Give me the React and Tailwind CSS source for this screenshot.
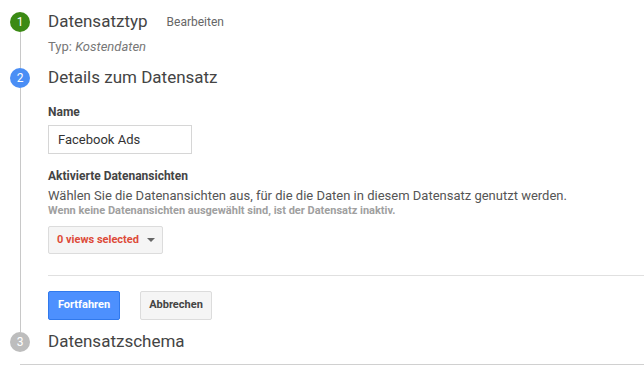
export default function App() {
  return (
    <div className="min-h-screen bg-white pl-[10px] pt-[12px] font-['Roboto',sans-serif] text-[#444]">
      {/* Step 1 */}
      <div className="flex">
        <div className="flex w-5 flex-col items-center">
          <div className="flex h-5 w-5 items-center justify-center rounded-full bg-[#3b8a14] text-[12px] text-white">1</div>
          <div className="w-px flex-1 bg-[#c8c8c8]"></div>
        </div>
        <div className="pb-[13px] pl-[18px]">
          <div className="flex h-5 items-center">
            <span className="text-[17px]">Datensatztyp</span>
            <span className="ml-[19px] text-[12px] text-[#666]">Bearbeiten</span>
          </div>
          <div className="mt-[7px] text-[13px] leading-[16px] text-[#777]">
            Typ: <i>Kostendaten</i>
          </div>
        </div>
      </div>

      {/* Step 2 */}
      <div className="flex">
        <div className="flex w-5 flex-col items-center">
          <div className="flex h-5 w-5 items-center justify-center rounded-full bg-[#4a8ef5] text-[12px] text-white">2</div>
          <div className="w-px flex-1 bg-[#c8c8c8]"></div>
        </div>
        <div className="flex-1 pb-[12px] pl-[18px]">
          <div className="flex h-5 items-center text-[17px]">Details zum Datensatz</div>
          <div className="mt-[17px] text-[12px] font-bold leading-[14px] text-[#444]">Name</div>
          <input
            className="mt-[6px] block h-[29px] w-[144px] border border-[#d6d6d6] px-[9px] text-[13px] text-[#333] outline-none"
            defaultValue="Facebook Ads"
          />
          <div className="mt-[15px] text-[12px] font-bold leading-[14px]">Aktivierte Datenansichten</div>
          <div className="mt-[5px] text-[13px] leading-[16px] text-[#555]">
            Wählen Sie die Datenansichten aus, für die die Daten in diesem Datensatz genutzt werden.
          </div>
          <div className="text-[11px] font-bold leading-[13px] text-[#a0a0a0]">
            Wenn keine Datenansichten ausgewählt sind, ist der Datensatz inaktiv.
          </div>
          <button className="mt-[9px] flex h-[28px] w-[115px] items-center rounded-[2px] border border-[#dcdcdc] bg-[#f5f5f5] pl-[8px] text-[11px] font-bold text-[#dd4b39]">
            0 views selected
            <span className="ml-[8px] h-0 w-0 border-x-[4px] border-t-[4px] border-x-transparent border-t-[#666]"></span>
          </button>
          <div className="mt-[21px] h-px bg-[#e0e0e0]"></div>
          <div className="mt-[15px] flex gap-[20px]">
            <button className="h-[29px] w-[72px] rounded-[2px] border border-[#3079ed] bg-[#4d90fe] text-[11px] font-bold text-white">
              Fortfahren
            </button>
            <button className="h-[29px] w-[72px] rounded-[2px] border border-[#dcdcdc] bg-[#f5f5f5] text-[11px] font-bold text-[#444]">
              Abbrechen
            </button>
          </div>
        </div>
      </div>

      {/* Step 3 */}
      <div className="flex">
        <div className="flex w-5 flex-col items-center">
          <div className="flex h-5 w-5 items-center justify-center rounded-full bg-[#bdbdbd] text-[12px] text-white">3</div>
        </div>
        <div className="pl-[18px]">
          <div className="flex h-5 items-center text-[17px]">Datensatzschema</div>
        </div>
      </div>
      <div className="ml-[10px] mt-[12px] h-px bg-[#d0d0d0]"></div>
    </div>
  );
}
